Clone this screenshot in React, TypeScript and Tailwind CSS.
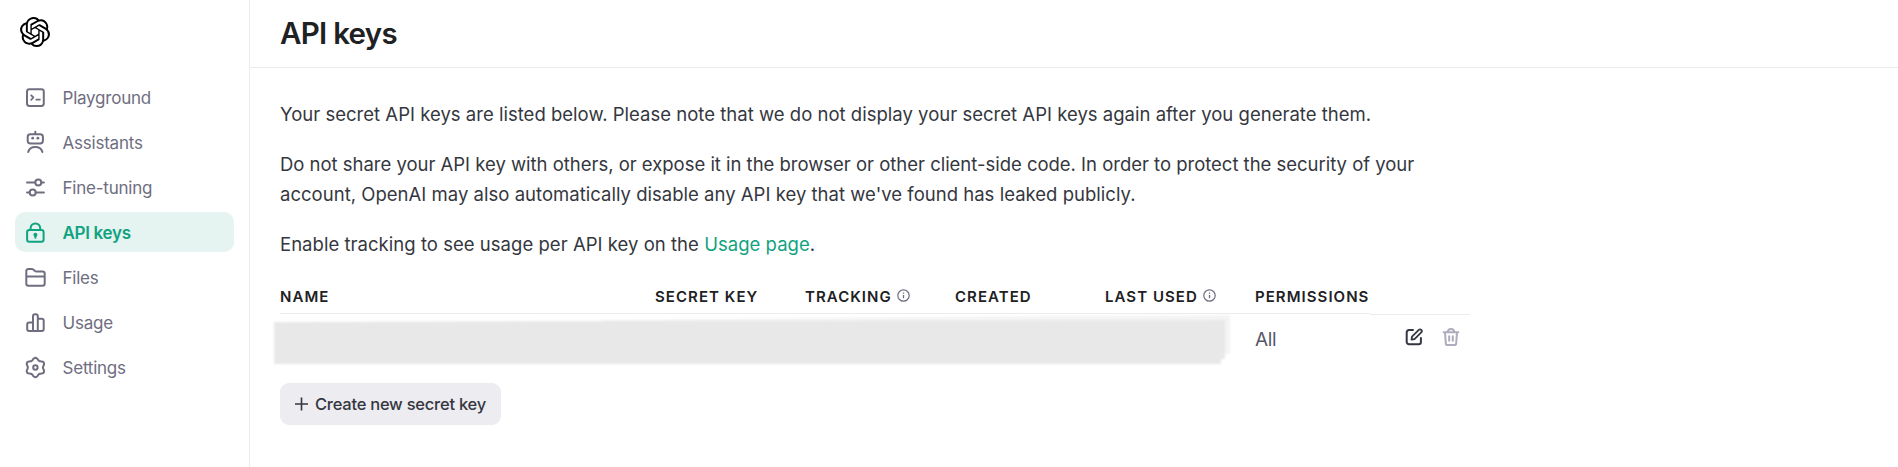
import type { ReactNode } from "react";
import { SiOpenai } from "react-icons/si";

const gearPath =
  Array.from({ length: 72 }, (_, i) => {
    const t = (i / 72) * Math.PI * 2;
    const r = 8.6 + 1.1 * Math.cos(6 * t);
    return `${i ? "L" : "M"}${(12.4 + r * Math.sin(t)).toFixed(2)} ${(12.5 - r * Math.cos(t)).toFixed(2)}`;
  }).join("") + "Z";

function NavIcon({ children }: { children: ReactNode }) {
  return (
    <svg
      className="size-6 shrink-0"
      viewBox="0 0 24 24"
      fill="none"
      stroke="currentColor"
      strokeWidth="2"
      strokeLinecap="round"
      strokeLinejoin="round"
    >
      {children}
    </svg>
  );
}

const items: { label: string; active?: boolean; icon: ReactNode }[] = [
  {
    label: "Playground",
    icon: (
      <>
        <rect x="4" y="4.2" width="16.8" height="16.8" rx="2.4" />
        <path d="M8.200 10.300l2.200 2.200-2.200 2.300M13.300 14.600h3.600" strokeWidth="1.800" />
      </>
    ),
  },
  {
    label: "Assistants",
    icon: (
      <>
        <rect x="4.700" y="4.200" width="15.200" height="9.200" rx="2.600" />
        <path d="M12.300 1.800v2M5.200 22c.8-3.200 3.600-5.100 7.100-5.100s6.300 1.900 7.100 5.100" />
        <circle cx="9.700" cy="8.200" r="1.400" fill="currentColor" stroke="none" />
        <circle cx="14.900" cy="8.200" r="1.400" fill="currentColor" stroke="none" />
      </>
    ),
  },
  {
    label: "Fine-tuning",
    icon: (
      <>
        <path d="M4 7.400h8.200M18.300 7.400h2.600M4 17.500h2.600M12.700 17.500h8.200" />
        <circle cx="15.300" cy="7.400" r="3" />
        <circle cx="9.700" cy="17.500" r="3" />
      </>
    ),
  },
  {
    label: "API keys",
    active: true,
    icon: (
      <>
        <rect x="4.100" y="10" width="16.500" height="11.800" rx="2.200" />
        <path d="M7.600 9.500V8.200a4.800 4.800 0 0 1 9.600 0v1.300" />
        <circle cx="12.400" cy="14.700" r="2" fill="currentColor" stroke="none" />
        <path d="M12.400 15v2.700" />
      </>
    ),
  },
  {
    label: "Files",
    icon: (
      <path d="M3.300 18.600V6.100A2.200 2.200 0 0 1 5.500 3.900h3.100c.7 0 1.300.2 1.800.7l1.500 1.300c.4.400.9.600 1.500.600h6.100a2.200 2.200 0 0 1 2.200 2.200v9.900a2.200 2.200 0 0 1-2.200 2.200h-14a2.200 2.200 0 0 1-2.200-2.200ZM3.300 11.400h18.400" />
    ),
  },
  {
    label: "Usage",
    icon: (
      <path d="M10 20.900V6.200a2 2 0 0 1 2-2h.8a2 2 0 0 1 2 2v14.700M10 12.400H6.200a2 2 0 0 0-2 2v4.500a2 2 0 0 0 2 2h12.500a2 2 0 0 0 2-2v-8.200a2 2 0 0 0-2-2h-3.900" />
    ),
  },
  {
    label: "Settings",
    icon: (
      <>
        <path d={gearPath} />
        <circle cx="12.400" cy="12.500" r="2.200" />
      </>
    ),
  },
];

function Info() {
  return (
    <svg className="-mt-[3px] ml-[5px] size-[13px]" viewBox="0 0 13 13" fill="none" stroke="#6e6e80" strokeWidth="1.2">
      <circle cx="6.500" cy="6.500" r="5.700" />
      <path d="M6.500 5.900v3.400M6.500 3.500v1.300" strokeWidth="1.300" />
    </svg>
  );
}

const columns = [
  { label: "NAME" },
  { label: "SECRET KEY" },
  { label: "TRACKING", info: true },
  { label: "CREATED" },
  { label: "LAST USED", info: true },
  { label: "PERMISSIONS" },
];

export default function App() {
  return (
    <div className="flex h-[467px] overflow-hidden bg-white font-['Inter','Liberation_Sans',sans-serif] text-[#353740]">
      <aside className="w-[250px] shrink-0 border-r border-[#ececf1] px-[15px] pt-[17px]">
        <SiOpenai className="ml-[5px] size-[30px] text-black" />
        <nav className="mt-[30px] flex flex-col gap-[5px]">
          {items.map((item) => (
            <a
              key={item.label}
              className={
                item.active
                  ? "flex h-10 items-center gap-[15.500px] rounded-[10px] bg-[#e5f3f1] px-2 text-[17px] font-semibold tracking-[-0.31px] text-[#10a37f]"
                  : "flex h-10 items-center gap-[15.500px] rounded-[10px] px-2 text-[17px] tracking-[-0.22px] text-[#6e6e80]"
              }
            >
              <NavIcon>{item.icon}</NavIcon>
              <span className="mt-[3px]">{item.label}</span>
            </a>
          ))}
        </nav>
      </aside>
      <main className="min-w-0 flex-1">
        <header className="flex h-[68px] items-center border-b border-[#ececec] pb-[2px] pl-[30px]">
          <h1 className="text-[29.500px] leading-[36px] font-semibold tracking-[-0.72px] text-[#202123]">API keys</h1>
        </header>
        <div className="pt-[31px] pl-[30px]">
          <div className="flex w-[1190px] flex-col gap-5 text-[18.500px] leading-[30px]">
            <p className="tracking-[0.018px]">
              Your secret API keys are listed below. Please note that we do not display your secret API keys again after
              you generate them.
            </p>
            <p>
              <span className="tracking-[-0.018px]">
                Do not share your API key with others, or expose it in the browser or other client-side code. In order to
                protect the security of your
              </span>
              <br />
              <span className="tracking-[0.023px]">
                account, OpenAI may also automatically disable any API key that we've found has leaked publicly.
              </span>
            </p>
            <p className="tracking-[0.035px]">
              Enable tracking to see usage per API key on the <a className="text-[#10a37f]">Usage page</a>.
            </p>
          </div>
          <div className="relative mt-[19px] w-[1190px]">
            <div className="grid h-[36px] grid-cols-[375px_150px_150px_150px_150px_115px_100px]">
              {columns.map((c) => (
                <div
                  key={c.label}
                  className="flex h-[36px] items-center border-b border-[#ececec] pt-[3px] text-[15px] leading-5 font-semibold tracking-[1.05px] whitespace-nowrap text-[#202123]"
                >
                  {c.label}
                  {c.info && <Info />}
                </div>
              ))}
              <div className="h-[37px] border-b border-[#ececec]" />
            </div>
            <div className="flex h-[50px] items-center pl-[975px] text-[19px] tracking-[-0.4px] text-[#565869]">
              <span className="mt-[2px] w-[149px]">All</span>
              <svg
                className="-mt-[4px] size-5 text-[#353740]"
                viewBox="0 0 20 20"
                fill="none"
                stroke="currentColor"
                strokeWidth="2"
                strokeLinecap="round"
                strokeLinejoin="round"
              >
                <path d="M9 3H5a2.300 2.300 0 0 0-2.300 2.300v9.600A2.300 2.300 0 0 0 5 17.200h9.600a2.300 2.300 0 0 0 2.300-2.300V11" />
                <path d="M8 9.700l6.800-6.800a1.700 1.700 0 0 1 2.500 2.500l-6.800 6.800-3 .5Z" strokeWidth="1.800" />
              </svg>
              <svg
                className="-mt-[4px] ml-[17px] size-5 text-[#acacbe]"
                viewBox="0 0 20 20"
                fill="none"
                stroke="currentColor"
                strokeWidth="2"
                strokeLinecap="round"
                strokeLinejoin="round"
              >
                <path d="M2.700 5.200h14.600M6.600 5c.3-1.900 1.500-3 3.400-3s3.100 1.100 3.400 3M4 5.400l.8 10.900a2 2 0 0 0 2 1.800h6.400a2 2 0 0 0 2-1.800L16 5.400M8.200 9.300v4.400M11.800 9.300v4.400" />
              </svg>
            </div>
            <svg className="absolute top-[36px] -left-[8px] h-[54px] w-[968px]" viewBox="0 0 968 54">
              <defs>
                <filter id="soft" x="-2%" y="-10%" width="104%" height="120%">
                  <feGaussianBlur stdDeviation="0.8" />
                </filter>
              </defs>
              <g filter="url(#soft)">
                <path d="M330 6L640 3L958 1V40H330Z" fill="#f4f4f4" />
                <path d="M2 8L300 7L700 6.500L953 6V45H949V50H2Z" fill="#e8e8e8" />
              </g>
            </svg>
          </div>
          <button className="mt-[19px] flex h-[42px] w-[221px] items-center rounded-[9px] bg-[#ececf1] pl-[14px] text-[16.500px] font-medium tracking-[-0.24px] whitespace-nowrap text-[#353740]">
            <svg className="mr-[7px] size-[14px]" viewBox="0 0 14 14" stroke="currentColor" strokeWidth="1.600">
              <path d="M7.500 .5v13M1 7h13" />
            </svg>
            Create new secret key
          </button>
        </div>
      </main>
    </div>
  );
}
